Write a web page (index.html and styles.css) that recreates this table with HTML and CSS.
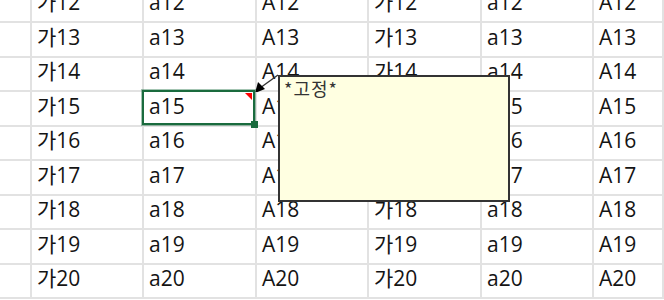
FILE: index.html
```html
<!DOCTYPE html>
<html lang="ko">
<head>
<meta charset="utf-8">
<title>Sheet</title>
<link rel="stylesheet" href="styles.css">
</head>
<body>
<div class="sheet">
  <div class="grid">
    <div class="cell"></div><div class="cell">가12</div><div class="cell">a12</div><div class="cell">A12</div><div class="cell">가12</div><div class="cell">a12</div><div class="cell">A12</div>
    <div class="cell"></div><div class="cell">가13</div><div class="cell">a13</div><div class="cell">A13</div><div class="cell">가13</div><div class="cell">a13</div><div class="cell">A13</div>
    <div class="cell"></div><div class="cell">가14</div><div class="cell">a14</div><div class="cell">A14</div><div class="cell">가14</div><div class="cell">a14</div><div class="cell">A14</div>
    <div class="cell"></div><div class="cell">가15</div><div class="cell selected">a15<span class="note-mark"></span><span class="fill-handle"></span></div><div class="cell">A15</div><div class="cell">가15</div><div class="cell">a15</div><div class="cell">A15</div>
    <div class="cell"></div><div class="cell">가16</div><div class="cell">a16</div><div class="cell">A16</div><div class="cell">가16</div><div class="cell">a16</div><div class="cell">A16</div>
    <div class="cell"></div><div class="cell">가17</div><div class="cell">a17</div><div class="cell">A17</div><div class="cell">가17</div><div class="cell">a17</div><div class="cell">A17</div>
    <div class="cell"></div><div class="cell">가18</div><div class="cell">a18</div><div class="cell">A18</div><div class="cell">가18</div><div class="cell">a18</div><div class="cell">A18</div>
    <div class="cell"></div><div class="cell">가19</div><div class="cell">a19</div><div class="cell">A19</div><div class="cell">가19</div><div class="cell">a19</div><div class="cell">A19</div>
    <div class="cell"></div><div class="cell">가20</div><div class="cell">a20</div><div class="cell">A20</div><div class="cell">가20</div><div class="cell">a20</div><div class="cell">A20</div>
  </div>
  <svg class="pointer" width="40" height="30" viewBox="0 0 40 30">
    <line x1="25" y1="2" x2="7" y2="15" stroke="#333" stroke-width="1.4"/>
    <polygon points="2,20 5,9 12,16" fill="#000"/>
  </svg>
  <div class="comment">*고정*</div>
</div>
</body>
</html>
```
FILE: styles.css
```css
html, body {
  margin: 0;
  padding: 0;
  background: #ffffff;
}
.sheet {
  position: relative;
  width: 664px;
  height: 300px;
  overflow: hidden;
  font-family: "Open Sans", "Noto Sans CJK KR", sans-serif;
}
.grid {
  display: grid;
  grid-template-columns: 32px 112px 113px 112px 113px 112px 1fr;
  grid-template-rows: 23px 35px 34px 35px 34px 35px 34px 35px 34px;
}
.cell {
  position: relative;
  box-sizing: border-box;
  display: flex;
  align-items: flex-end;
  overflow: hidden;
  padding: 0 0 5px 5px;
  border-right: 2px solid #e2e2e2;
  border-bottom: 2px solid #e2e2e2;
  font-size: 21px;
  line-height: 28px;
  color: #141414;
  white-space: nowrap;
}
.selected {
  overflow: visible;
  z-index: 1;
}
.selected::after {
  content: "";
  position: absolute;
  top: -2px;
  left: -2px;
  right: 0;
  bottom: 0;
  border: 2px solid #1a6b3e;
  outline: 1px solid rgba(26, 107, 62, 0.4);
}
.note-mark {
  position: absolute;
  top: 1px;
  right: 3px;
  width: 0;
  height: 0;
  border-top: 7px solid #ff0000;
  border-left: 7px solid transparent;
}
.fill-handle {
  position: absolute;
  right: -3px;
  bottom: -3px;
  width: 7px;
  height: 7px;
  background: #1a6b3e;
  z-index: 2;
}
.pointer {
  position: absolute;
  left: 253px;
  top: 73px;
}
.comment {
  position: absolute;
  left: 278px;
  top: 75px;
  width: 224px;
  height: 123px;
  border: 2px solid #333333;
  background: #ffffe1;
  padding: 0 0 0 4px;
  box-sizing: content-box;
  font-family: "Noto Sans CJK KR", sans-serif;
  font-size: 18px;
  line-height: 22px;
  color: #333333;
  letter-spacing: 1px;
}
```
